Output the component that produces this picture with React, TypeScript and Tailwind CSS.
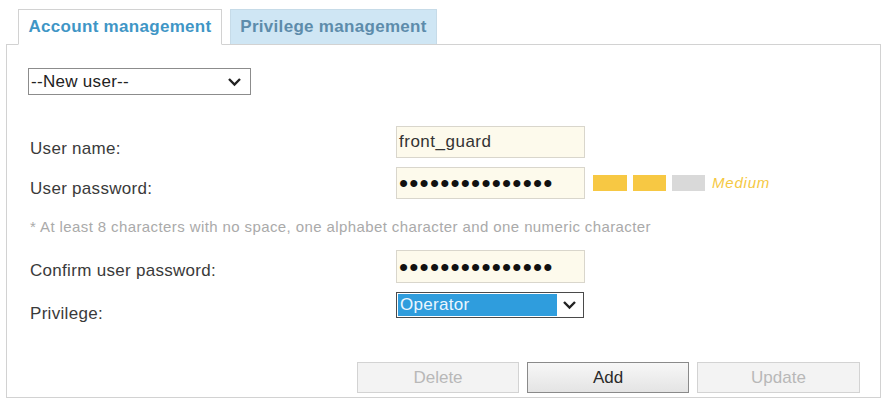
export default function App() {
  const dots = "•••••••••••••••";
  return (
    <div className="w-[884px] h-[401px] bg-white overflow-hidden font-['Liberation_Sans',Arial,sans-serif]">
      {/* tabs */}
      <div className="flex items-end gap-[8px] pl-[18px] pt-[9px]">
        <div className="relative z-10 -mb-px flex h-[36px] w-[204px] items-center justify-center border border-b-white border-[#d2d2d2] bg-white text-[17px] font-bold tracking-[0.3px] text-[#3f96c6]">
          Account management
        </div>
        <div className="flex h-[35px] w-[207px] items-center justify-center border border-b-0 border-[#c6dbe8] bg-[#cfe6f4] text-[17px] font-bold tracking-[0.3px] text-[#5d8cab]">
          Privilege management
        </div>
      </div>

      {/* panel */}
      <div className="ml-[6px] w-[875px] h-[354px] border border-[#d2d2d2] bg-white pt-[23px]">
        <div className="ml-[21px] flex h-[27px] w-[223px] items-center justify-between border border-[#8c8c8c] bg-white pl-[2px] pr-[8px] text-[17px] tracking-[0.3px] text-[#222]">
          <span>--New user--</span>
          <svg width="15" height="10" viewBox="0 0 15 10" fill="none">
            <polyline points="2,2 7.5,7.5 13,2" stroke="#222" strokeWidth="2.4" />
          </svg>
        </div>

        <div className="mt-[31px] flex h-[32px] items-start">
          <div className="mt-[14px] w-[389px] pl-[23px] text-[17px] leading-none tracking-[0.3px] text-[#3a3a3a]">User name:</div>
          <div className="flex h-[32px] w-[189px] items-center border border-[#d9d6cc] bg-[#fdfaec] pl-[2px] text-[17px] tracking-[0.5px] text-[#333]">
            front_guard
          </div>
        </div>

        <div className="mt-[9px] flex h-[32px] items-start">
          <div className="mt-[13px] w-[389px] pl-[23px] text-[17px] leading-none tracking-[0.3px] text-[#3a3a3a]">User password:</div>
          <div className="flex h-[32px] w-[189px] items-center border border-[#d9d6cc] bg-[#fdfaec] pl-[2px] text-[26px] leading-none tracking-[1.2px] text-[#111]">
            {dots}
          </div>
          <div className="ml-[8px] flex h-[32px] items-center gap-[6px]">
            <div className="h-[16px] w-[34px] bg-[#f7c843]" />
            <div className="h-[16px] w-[33px] bg-[#f7c843]" />
            <div className="h-[16px] w-[33px] bg-[#d9d9d9]" />
            <span className="ml-[1px] text-[15px] italic tracking-[0.8px] text-[#f5c842]">Medium</span>
          </div>
        </div>

        <div className="mt-[20px] pl-[23px] text-[15px] leading-[16px] tracking-[0.4px] text-[#aaaaaa]">
          * At least 8 characters with no space, one alphabet character and one numeric character
        </div>

        <div className="mt-[15px] flex h-[33px] items-start">
          <div className="mt-[12px] w-[389px] pl-[23px] text-[17px] leading-none tracking-[0.3px] text-[#3a3a3a]">Confirm user password:</div>
          <div className="flex h-[33px] w-[189px] items-center border border-[#d9d6cc] bg-[#fdfaec] pl-[2px] text-[26px] leading-none tracking-[1.2px] text-[#111]">
            {dots}
          </div>
        </div>

        <div className="mt-[9px] flex h-[26px] items-start">
          <div className="mt-[13px] w-[389px] pl-[23px] text-[17px] leading-none tracking-[0.3px] text-[#3a3a3a]">Privilege:</div>
          <div className="flex h-[26px] w-[188px] items-stretch border border-[#4a4a4a] bg-white p-px">
            <div className="flex w-[159px] items-center bg-[#2f9ddd] pl-[2px] text-[17px] tracking-[0.3px] text-[#eaf6ff]">Operator</div>
            <div className="flex flex-1 items-center justify-center">
              <svg width="15" height="10" viewBox="0 0 15 10" fill="none">
                <polyline points="2,2 7.5,7.5 13,2" stroke="#222" strokeWidth="2.4" />
              </svg>
            </div>
          </div>
        </div>

        <div className="mt-[44px] ml-[350px] flex gap-[8px]">
          <button className="h-[31px] w-[162px] border border-[#d3d3d3] bg-[#f3f3f3] text-[17px] text-[#b8b8b8]">Delete</button>
          <button className="h-[31px] w-[162px] border border-[#8a8a8a] bg-gradient-to-b from-[#f7f7f7] to-[#e4e4e4] text-[17px] text-[#2a2a2a]">Add</button>
          <button className="h-[31px] w-[163px] border border-[#d3d3d3] bg-[#f3f3f3] text-[17px] text-[#b8b8b8]">Update</button>
        </div>
      </div>
    </div>
  );
}
